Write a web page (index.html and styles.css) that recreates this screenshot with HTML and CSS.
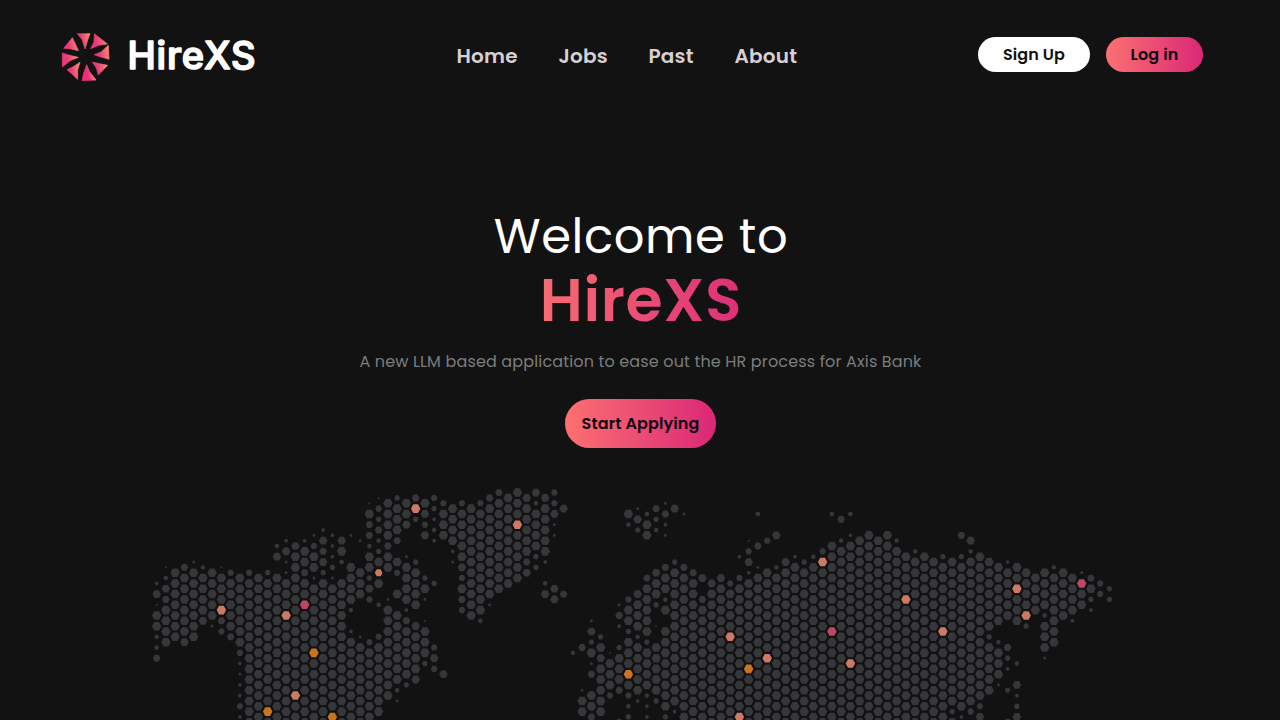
FILE: index.html
```html
<!DOCTYPE html>
<html lang="en">
<head>
<meta charset="utf-8">
<title>HireXS</title>
<link rel="stylesheet" href="styles.css">
</head>
<body>
<header class="header">
  <a class="brand">
    <svg class="brand-mark" viewBox="0 0 180 174">
      <defs>
        <linearGradient id="petal" x1="0" y1="0.2" x2="1" y2="0">
          <stop offset="0.25" stop-color="#e93a7a"/><stop offset="0.9" stop-color="#f98872"/>
        </linearGradient>
        <linearGradient id="petalDown" x1="0" y1="0.6" x2="1" y2="0.3">
          <stop offset="0.4" stop-color="#ee2d7c"/><stop offset="0.75" stop-color="#f98872"/>
        </linearGradient>
      </defs>
      <g fill="url(#petal)" stroke="url(#petal)" stroke-width="2" stroke-linejoin="round">
        <path d="M67 17H105L98 36L90 63L82 36Z"/>
        <path d="M118 17L157 48L132 52L107 62L117 42Z"/>
        <path d="M160 52L162 94L140 88L117 80L138 72Z"/>
        <path d="M112 102L138 108L158 112L130 141L124 120Z"/>
        <path d="M75 103L68 125V154L36 125L58 114Z"/>
        <path d="M22 75L44 82L70 88L46 98L22 117Z"/>
        <path d="M52 29L60 45L70 68L48 63L26 61Z"/>
      </g>
      <path fill="url(#petalDown)" stroke="url(#petalDown)" stroke-width="2" stroke-linejoin="round" d="M95 110L103 130L123 156L81 158L86 135Z"/>
    </svg>
    <svg class="brand-name" viewBox="0 0 140 48"><text x="0.5" y="38" textLength="128">HireXS</text></svg>
  </a>
  <nav class="nav">
    <a class="nav-home">Home</a><a class="nav-jobs">Jobs</a><a class="nav-past">Past</a><a class="nav-about">About</a>
  </nav>
  <div class="actions">
    <button class="btn btn-light">Sign Up</button>
    <button class="btn btn-login">Log in</button>
  </div>
</header>
<main class="hero">
  <h1 class="title">Welcome to</h1>
  <div class="title-brand">HireXS</div>
  <p class="tagline">A new LLM based application to ease out the HR process for Axis Bank</p>
  <button class="btn btn-start">Start Applying</button>
</main>
<svg class="map" id="map" viewBox="0 480 1280 240"></svg>
<script src="map.js"></script>
</body>
</html>
```
FILE: styles.css
```css
* { box-sizing: border-box; }
body {
  margin: 0;
  height: 720px;
  overflow: hidden;
  display: flex;
  flex-direction: column;
  background: #121212;
  color: #fff;
  font-family: Poppins, Inter, "Open Sans", sans-serif;
}
.header {
  height: 112px;
  flex: none;
  display: grid;
  grid-template-columns: 456px 522px 1fr;
  align-items: center;
}
.brand { display: flex; align-items: center; padding: 1px 0 0 55px; }
.brand-mark { width: 60px; height: 58px; }
.brand-name { width: 140px; height: 48px; margin: -3px 0 0 12px; }
.brand-name text {
  font: 500 38px Inter, sans-serif;
  fill: #fff;
  stroke: #fff;
  stroke-width: 1.6px;
  stroke-linejoin: round;
}
.nav { display: flex; padding-left: 0.5px; color: #d6d0d3; font-size: 20px; line-height: 30px; font-weight: 600; letter-spacing: 0.2px; white-space: nowrap; }
.nav-home { width: 102px; }
.nav-jobs { width: 90px; }
.nav-past { width: 86px; }
.actions { display: flex; gap: 16px; padding-bottom: 3px; }
.btn {
  border: 0;
  padding: 0;
  border-radius: 24px;
  color: #0d0610;
  font: 600 16px/24px Poppins, Inter, sans-serif;
  letter-spacing: 0.1px;
  white-space: nowrap;
  background: linear-gradient(90deg, #fb7171, #db2777);
}
.btn-light { width: 112px; height: 35px; background: #fff; color: #121212; }
.btn-login { width: 97px; height: 35px; }
.hero { height: 368px; flex: none; padding-top: 100px; display: flex; flex-direction: column; align-items: center; }
.title { margin: 0; padding-left: 2px; font-size: 48px; line-height: 50px; font-weight: 400; letter-spacing: 0.6px; }
.title-brand {
  margin-top: 7px;
  padding-left: 2px;
  font-size: 60px;
  line-height: 62px;
  font-weight: 600;
  letter-spacing: 0.6px;
  background: linear-gradient(90deg, #f86d72, #dd2f78);
  -webkit-background-clip: text;
  background-clip: text;
  color: transparent;
}
.tagline { margin: 19px 0 0; padding-left: 1px; font-size: 16px; line-height: 24px; letter-spacing: 0.15px; color: #7b7d7d; white-space: nowrap; }
.btn-start { width: 151px; height: 49px; margin-top: 25px; padding-left: 1px; border-radius: 25px; }
.map { width: 1280px; height: 240px; flex: none; display: block; }
.dot { fill: #36373b; }
.dot-coral { fill: #cc7966; }
.dot-orange { fill: #c97422; }
.dot-pink { fill: #be4864; }
```
FILE: map.js
```js
// Each entry is a column; "a-b" is a run of full dots on every other half row,
// "a:s" is one dot with size s out of 9.
const columns = `17:3 19:8 21:1 23-25 27:4 29:4 31:7
14:1 16:4 18:8 20:7 22-28
15-27
14:7 16-26 28:8
13:2 15-27
14:4 16-22 24:8
15-23 25:2
14:1 16-22 24:7 26:6
15:6 17-25 27:7
16-28 30:6 32:3 34:2 36:3 38:3 40:6 42:3
15:6 17-43
16-42
15:5 17-43
10:4 12:8 16-42
9:3 11:8 13:2 15:2 17-43
10:8 12-42
9:3 11-13 15:7 17-43
8:2 10:6 12-14 16:2 18-42
7:3 9:8 11:7 13:8 15:5 17-43
8:3 10:3 12:3 14:5 16:2 18-42
9:8 11:9 13:4 17-43
8:2 14-20 22:4 26:3 28-42
9:2 15-19 27:2 29-43
2:1 4:9 6:7 8:7 10:4 12-14 16:5 18:8 20:6 28:6 30-42
1:1 3:6 5:5 7:7 9:4 11:5 13:9 15:7 17:9 21:4 27:6 29-41
2-8 10:7 12-14 20:2 22-38
1:5 3-7 9:7 13:9 15:6 19:9 23-35 37:4 39:2
2-4 6:8 12:2 14-20 22:3 24:7 26-34 36:5
1:7 3:9 5:5 13:5 15-21 25:8 27-33 35:8
2:9 4:8 6:6 8:8 16:5 18:9 20:2 24:1 26-30 32:5
1:6 3:5 5:3 7:4 9:3 17:5 29:6 31:8 33:6
2:6 4-8 34:8
3-9 11:3 13:2
2:6 4-12 14:8 16:6 18:9 20:7 22:6
3-23
2:6 4-22 24:4
1:7 3-19 21:2
0:7 2-18
1-17
0-16
1:8 3-11 13:7 15:8
0:8 2:4 4-10 12:5 14:5
1:8 3-11 13:3 17:4 19:8
0:6 2:6 4:8 6:2 8:2 18:8 20:8
3:8 19:7
30:4
29:7 37:2 39-41
24:2 26:8 28:5 30:9 32:2 34:7 38-40 42:7
27:5 29:9 31:8 33-41
30:1 32-36 38:6
21:2 23:7 25:3 29:5 31-35 37:7 43:7
4:9 6:4 20:6 22-24 26:5 28-36 38:6 40:4 42:5
3:2 5:8 7:5 19:8 21-25 27:4 29-37 39:3
4:4 6-8 16:7 18-26 28:5 30-36 38:4 40:3 42:3
3:7 5:5 7:4 15:8 17-19 21:5 25:1 29-37 39:5
2:2 4:7 6:3 8:2 14:7 16-18 20:4 22:9 26-40 42:5
3:8 13:5 15-39 41:3
4:2 14:7 16-42
15:7 17-43
16:8 20:7 22-42
17:8 19-43
16:8 18-42
17:6 19-43
12:3 16:6 18-42
9:1 11:6 13:8 15:3 17-43
4:4 10:7 14:2 16-42
9:6 15-43
8:8 14:4 16-42
13:8 15-43
12:3 14-42
13:5 15-43
12:4 14-42
11:6 13-43
4:4 10-42
5:7 9:4 11-43
4:4 8:3 10-42
9-43
8-42
9-43
8-42
9:4 11-43
12-42
11:4 13-43
12-42
13-43
12:5 14-42
13-39 41:5 43:9
8:7 12:5 14-40 42:3
9:8 11:4 13-39 41:6
12-38 40:6 42:8
13-25 27:5 29-37
14-24 28:4 30-34 36:2
13:3 15-23 29:7 31:5 33:3 37:5 43:7
14-24 32:4 36:8 38:3 40:5 42:8
15-23 25:5
16-22
15-21 23:4 25-29 31:2
14:4 16-28
15-23
16-22 24:3
15:2 17-21
16:7 18:9 20:5 22:3
17:6 19:6
18:5 20:5`.split("\n");

const accents = {
  coral: "7,22 14,23 15,38 24,15 28,3 39,6 62,27 63,42 66,31 72,13 75,32 81,20 85,26 93,18 94,23",
  orange: "12,41 17,30 19,42 51,34 64,33",
  pink: "16,21 73,26 100,17"
};
const accentOf = {};
for (const [name, list] of Object.entries(accents))
  for (const key of list.split(" ")) accentOf[key] = name;

let out = "";
function dot(col, row, size) {
  const x = 156.65 + col * 9.25, y = 492.6 + row * 5.342;
  const r = 0.6 + size * 0.46, h = r * 0.9, q = r / 2;
  const accent = accentOf[col + "," + row];
  const p = [[-r, 0], [-q, -h], [q, -h], [r, 0], [q, h], [-q, h]]
    .map(([a, b]) => (x + a).toFixed(2) + "," + (y + b).toFixed(2)).join(" ");
  out += `<polygon class="dot${accent ? " dot-" + accent : ""}" points="${p}"/>`;
}
columns.forEach((line, col) => {
  for (const token of line.trim().split(" ")) {
    if (token.includes(":")) {
      const [row, size] = token.split(":").map(Number);
      dot(col, row, size);
    } else {
      const [from, to] = token.split("-").map(Number);
      for (let row = from; row <= (to || from); row += 2) dot(col, row, 9);
    }
  }
});
document.getElementById("map").innerHTML = out;
```
